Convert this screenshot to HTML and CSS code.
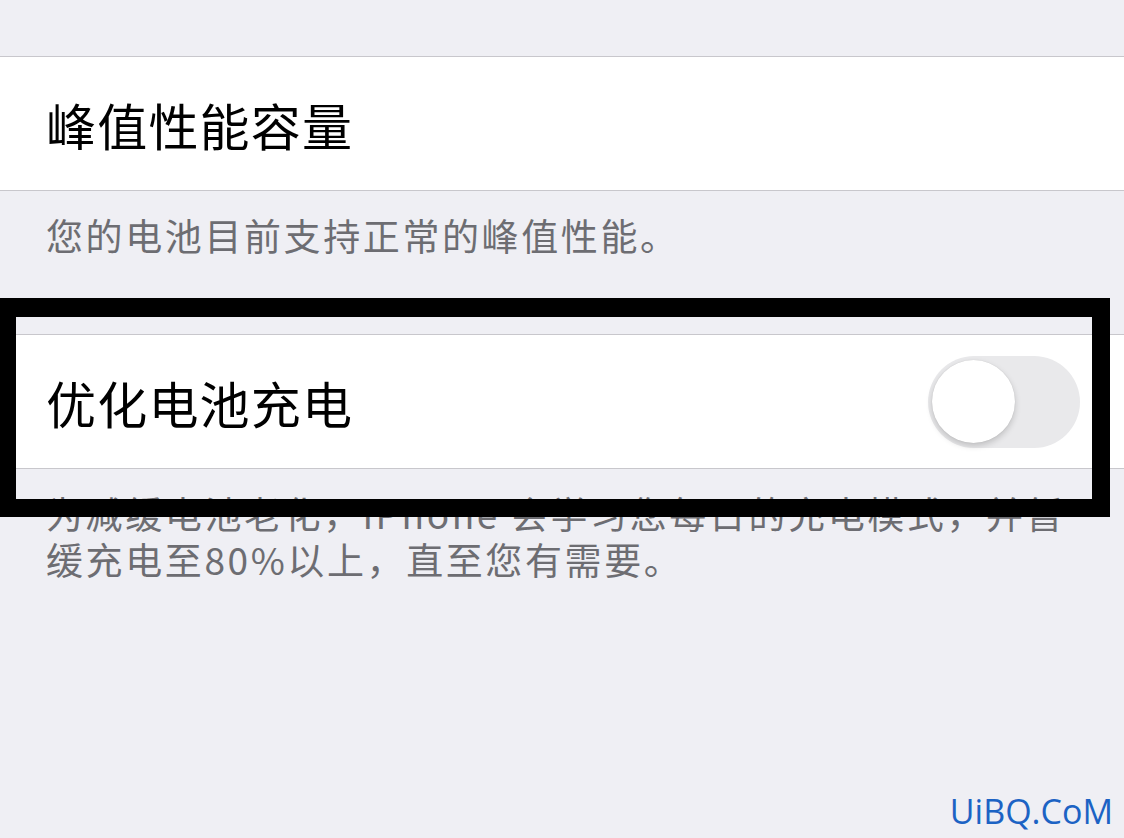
FILE: index.html
```html
<!DOCTYPE html>
<html lang="zh-CN">
<head>
    <meta charset="UTF-8">
    <meta name="viewport" content="width=device-width, initial-scale=1.0">
    <title>电池健康</title>
    <link rel="stylesheet" href="styles.css">
</head>
<body>
    <div class="settings">
        <!-- Peak performance -->
        <div class="group-gap"></div>
        <div class="cell-group">
            <div class="cell">
                <span class="cell-title">峰值性能容量</span>
            </div>
        </div>
        <p class="group-note note-short">您的电池目前支持正常的峰值性能。</p>

        <!-- Optimized charging -->
        <div class="cell-group">
            <div class="cell">
                <span class="cell-title">优化电池充电</span>
                <span class="switch"><span class="knob"></span></span>
            </div>
        </div>
        <p class="group-note">为减缓电池老化，iPhone 会学习您每日的充电模式，并暂缓充电至80%以上，直至您有需要。</p>
    </div>

    <!-- Highlight frame drawn over the screenshot -->
    <div class="highlight"></div>

    <div class="watermark">UiBQ.CoM</div>
</body>
</html>
```

FILE: styles.css
```css
/* Global */
body {
    margin: 0;
    padding: 0;
    background: #efeff4;
    font-family: "Noto Sans CJK SC", "Noto Sans", sans-serif;
    color: #000;
    overflow: hidden;
}

.settings {
    display: flex;
    flex-direction: column;
}

.group-gap {
    height: 56px;
}

/* Cells */
.cell-group {
    background: #fff;
    border-top: 1px solid #c8c7cc;
    border-bottom: 1px solid #c8c7cc;
}

.cell {
    height: 133px;
    display: flex;
    align-items: center;
    justify-content: space-between;
    padding: 0 44px 0 46px;
}

.cell-title {
    font-size: 50px;
    letter-spacing: 1.2px;
    line-height: 1;
}

/* Switch (off) */
.switch {
    width: 152px;
    height: 92px;
    border-radius: 46px;
    background: #e9e9eb;
    display: flex;
    align-items: center;
    padding-left: 4px;
    box-sizing: border-box;
}

.knob {
    width: 83px;
    height: 83px;
    border-radius: 50%;
    background: #fff;
    box-shadow: 0 3px 6px rgba(0, 0, 0, 0.18), 0 0 1px rgba(0, 0, 0, 0.15);
}

/* Footer notes */
.group-note {
    margin: 0;
    padding: 21px 44px 0 46px;
    font-size: 37px;
    letter-spacing: 2.6px;
    line-height: 46px;
    color: #6d6d72;
}

.note-short {
    height: 122px;
}

/* Overlay */
.highlight {
    position: absolute;
    left: 0;
    top: 298px;
    width: 1110px;
    height: 219px;
    box-sizing: border-box;
    border-style: solid;
    border-color: #000;
    border-width: 19px 18px 18px 16px;
}

.watermark {
    position: absolute;
    right: 11px;
    bottom: 4px;
    font-family: "Open Sans", "DejaVu Sans", sans-serif;
    font-size: 34px;
    color: #1c63c4;
}
```
